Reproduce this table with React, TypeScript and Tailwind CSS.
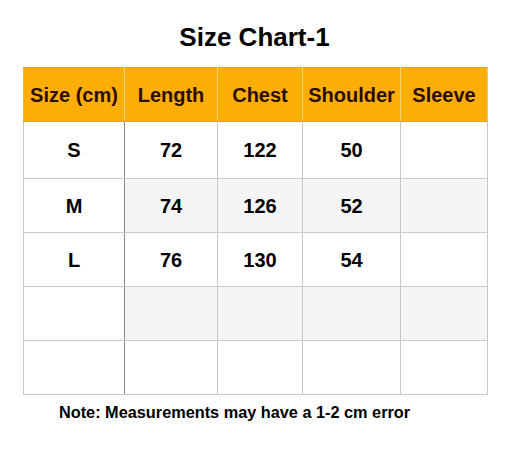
const headers = ["Size (cm)", "Length", "Chest", "Shoulder", "Sleeve"];

const rows: string[][] = [
  ["S", "72", "122", "50", ""],
  ["M", "74", "126", "52", ""],
  ["L", "76", "130", "54", ""],
  ["", "", "", "", ""],
  ["", "", "", "", ""],
];

const widths = ["w-[101px]", "w-[93px]", "w-[85px]", "w-[98px]", "w-[87px]"];
const heights = ["h-[57px]", "h-[54px]", "h-[54px]", "h-[54px]", "h-[54px]"];

export default function App() {
  return (
    <div className="h-[450px] w-[520px] bg-white font-['Liberation_Sans',Arial,sans-serif] text-black">
      <h1 className="pr-[11px] pt-[23px] text-center text-[26px] font-bold leading-[28px]">
        Size Chart-1
      </h1>

      <table className="ml-[23px] mt-[16px] w-[464px] table-fixed border-collapse">
        <colgroup>
          {widths.map((w) => (
            <col key={w} className={w} />
          ))}
        </colgroup>
        <thead>
          <tr className="h-[54px] bg-[#fdae06]">
            {headers.map((h, i) => (
              <th
                key={h}
                className={`border-t border-b border-t-[#e2a523] border-b-[#d6a13c] text-center text-[20px] font-bold text-[#2a0c02] ${
                  i === 0 ? "border-l border-l-[#d9b46a]" : ""
                } ${i === 4 ? "border-r border-r-[#d8c7a8]" : "border-r border-r-[#f5d27c]"}`}
              >
                {h}
              </th>
            ))}
          </tr>
        </thead>
        <tbody>
          {rows.map((row, r) => (
            <tr key={r} className={heights[r]}>
              {row.map((cell, c) => (
                <td
                  key={c}
                  className={`border border-[#c9c9c9] text-center text-[20px] font-bold ${
                    c === 0 ? "border-r-[#8a8a8a] bg-white" : r % 2 === 1 ? "bg-[#f4f4f4]" : "bg-white"
                  }`}
                >
                  {cell}
                </td>
              ))}
            </tr>
          ))}
        </tbody>
      </table>

      <p className="mt-[7px] pl-[59px] text-[16.3px] font-bold leading-[20px]">
        Note: Measurements may have a 1-2 cm error
      </p>
    </div>
  );
}
